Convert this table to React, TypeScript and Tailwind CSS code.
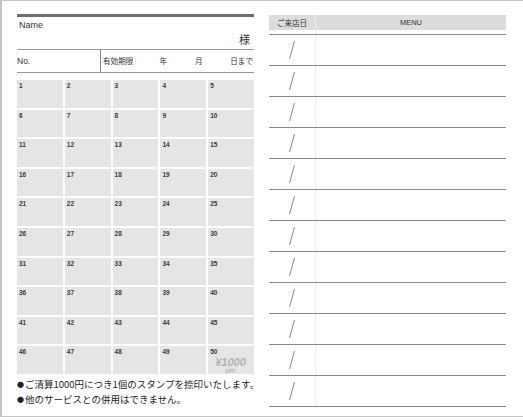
const numbers = Array.from({ length: 50 }, (_, i) => i + 1)
const visits = Array.from({ length: 12 }, (_, i) => i)

const jp = { fontFamily: '"Noto Sans CJK JP", "Noto Sans", sans-serif' }
const latin = { fontFamily: '"Liberation Sans", Arial, sans-serif' }

function Slash() {
  return (
    <svg width="10" height="20" viewBox="0 0 10 20" className="block">
      <line x1="7.5" y1="1" x2="2.5" y2="19" stroke="#6b6b6b" strokeWidth="0.8" />
    </svg>
  )
}

export default function App() {
  return (
    <div className="w-[523px] h-[420px] bg-white">
      <div className="h-[417px] border-t border-l-2 border-b border-[#c4c4c4] flex">
        {/* Stamp card */}
        <div className="w-[237px] ml-[15px] pt-[13px] flex flex-col">
          <div className="h-[3px] bg-[#6e6e6e]" />
          <div className="h-[33px] border-b border-[#9a9a9a] flex flex-col text-[#333]">
            <p className="text-[9px] leading-none mt-[4px] ml-[2px]" style={latin}>Name</p>
            <p className="text-[11px] leading-none self-end mt-auto mb-[4px] mr-[4px]" style={jp}>様</p>
          </div>
          <div className="h-[23px] border-b border-[#9a9a9a] flex items-center text-[#333]">
            <div className="w-[84px] h-full border-r border-[#8a8a8a] flex items-center">
              <span className="text-[8.5px]" style={latin}>No.</span>
            </div>
            <div className="flex-1 flex items-center text-[7.6px] pl-[2px]" style={jp}>
              <span>有効期限</span>
              <span className="ml-[26px]">年</span>
              <span className="ml-[28px]">月</span>
              <span className="ml-auto mr-[1px]">日まで</span>
            </div>
          </div>

          <div className="mt-[7px] h-[294px] grid grid-cols-5 grid-rows-10 gap-[2px]">
            {numbers.map(n => (
              <div key={n} className="relative bg-[#e5e5e5]">
                <span
                  className="absolute left-[2px] top-[3px] text-[6.5px] font-bold leading-none text-[#3a3a3a]"
                  style={latin}
                >
                  {n}
                </span>
                {n === 50 && (
                  <div className="absolute left-[7px] top-[11px] flex flex-col items-center leading-none text-[#b3b3b3]" style={latin}>
                    <span className="text-[11px] font-bold italic">¥1000</span>
                    <span className="text-[5.5px] font-bold mt-[1px]">OFF</span>
                  </div>
                )}
              </div>
            ))}
          </div>

          <div className="mt-[3px] text-[9.5px] leading-[15px] text-[#222] whitespace-nowrap" style={jp}>
            <p className="flex items-center">
              <span className="text-[7px] mr-[1px]">●</span>ご清算1000円につき1個のスタンプを捺印いたします。
            </p>
            <p className="flex items-center">
              <span className="text-[7px] mr-[1px]">●</span>他のサービスとの併用はできません。
            </p>
          </div>
        </div>

        {/* Visit log */}
        <div className="w-[237px] ml-[15px] pt-[14px] flex flex-col">
          <div className="h-[15px] bg-[#dcdcdc] flex items-center text-[#333]">
            <div className="w-[47px] h-full border-r border-[#ececec] flex items-center justify-center">
              <span className="text-[7.5px]" style={jp}>ご来店日</span>
            </div>
            <div className="flex-1 flex items-center justify-center">
              <span className="text-[7.5px]" style={latin}>MENU</span>
            </div>
          </div>
          <div className="h-[5px] border-b border-[#8a8a8a] flex">
            <div className="w-[47px] border-r border-[#ececec]" />
          </div>
          {visits.map(i => (
            <div key={i} className="h-[31px] border-b border-[#8a8a8a] flex">
              <div className="w-[47px] border-r border-[#ececec] flex items-center justify-center">
                <Slash />
              </div>
              <div className="flex-1" />
            </div>
          ))}
        </div>
      </div>
    </div>
  )
}
